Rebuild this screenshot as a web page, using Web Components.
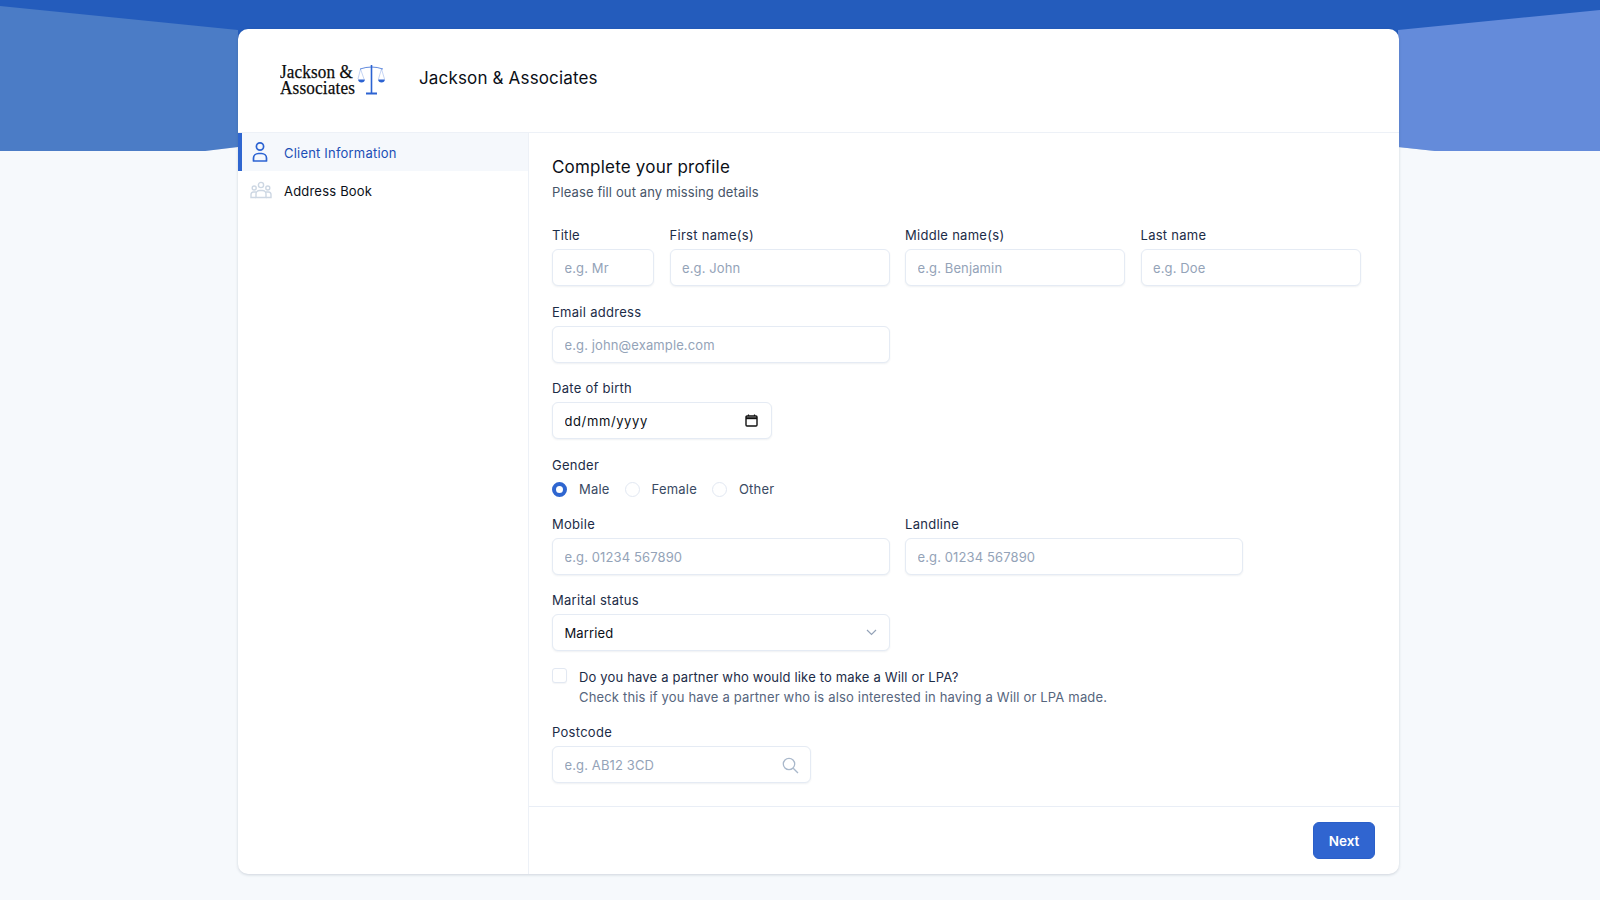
<!DOCTYPE html>
<html lang="en">
<head>
<meta charset="utf-8">
<title>Jackson &amp; Associates</title>
<style>
  html, body { margin: 0; height: 100%; }
  body {
    background: #f6f9fc;
    font-family: Inter, "Liberation Sans", sans-serif;
    font-size: 13px;
    letter-spacing: .15px;
    color: #000;
    position: relative;
    overflow: hidden;
  }
</style>
</head>
<body>
<page-backdrop></page-backdrop>
<app-card>
  <app-header slot="header" name="Jackson &amp; Associates"></app-header>
  <side-nav slot="nav">
    <nav-item active icon="person">Client Information</nav-item>
    <nav-item icon="people">Address Book</nav-item>
  </side-nav>
  <profile-form slot="main"></profile-form>
</app-card>

<script>
// small helper so every element gets an open root with its own styles
function shadow(el, html) {
  el.attachShadow({ mode: 'open' }).innerHTML = html;
}

class PageBackdrop extends HTMLElement {
  connectedCallback() {
    shadow(this, `
      <style>
        :host { position: absolute; top: 0; left: 0; right: 0; height: 151px; display: block; }
        svg { display: block; }
      </style>
      <svg width="1600" height="151" viewBox="0 0 1600 151">
        <rect width="1600" height="151" fill="#245cbc"/>
        <polygon points="0,6 238,30 238,147 205,151 0,151" fill="#4b7cc6"/>
        <polygon points="1398,30 1600,10 1600,151 1435,151 1398,147" fill="#648bda"/>
        <polygon points="205,151 238,147 238,151" fill="#f6f9fc"/>
        <polygon points="1398,147 1435,151 1398,151" fill="#f6f9fc"/>
      </svg>`);
  }
}

class AppCard extends HTMLElement {
  connectedCallback() {
    shadow(this, `
      <style>
        :host {
          position: relative;
          display: block;
          box-sizing: border-box;
          width: 1161px;
          height: 845px;
          margin: 29px 0 0 238px;
          background: #fff;
          border-radius: 10px;
          box-shadow: 0 1px 3px rgba(30, 50, 80, .18);
          overflow: hidden;
        }
        .body { display: flex; height: 741px; }
        ::slotted([slot=nav]) { width: 291px; flex: none; }
        ::slotted([slot=main]) { flex: 1; }
      </style>
      <slot name="header"></slot>
      <div class="body">
        <slot name="nav"></slot>
        <slot name="main"></slot>
      </div>`);
  }
}

class AppHeader extends HTMLElement {
  connectedCallback() {
    shadow(this, `
      <style>
        :host {
          display: flex;
          align-items: center;
          gap: 31px;
          height: 103px;
          padding-left: 42px;
          border-bottom: 1px solid #edf1f7;
        }
        svg { display: block; }
        svg text { font-family: "Liberation Serif", serif; font-size: 19px; fill: #0b0b0b; stroke: #0b0b0b; stroke-width: .25px; }
        h1 { margin: -5px 0 0; font-size: 17px; font-weight: 400; letter-spacing: .16px; line-height: 24px; color: #0b0f17; }
      </style>
      <svg width="108" height="40" viewBox="0 0 108 40" role="img">
        <text x="0" y="17" textLength="73" lengthAdjust="spacingAndGlyphs">Jackson &amp;</text>
        <text x="0" y="32.500" textLength="75" lengthAdjust="spacingAndGlyphs">Associates</text>
        <g fill="none" stroke="#2c63d2">
          <path d="M80 8 Q86 6 91.500 6 Q97 6 103 8" stroke-width="1" opacity=".75"/>
          <path d="M91.500 4 V32" stroke-width="1.600"/>
          <path d="M86 32.500 H97" stroke-width="1.800"/>
          <path d="M80.500 8 L78 18 M80.500 8 L84 18 M101.500 8 L98.500 18 M101.500 8 L104.500 18" stroke-width=".5" opacity=".55"/>
        </g>
        <path d="M78 18.500 H85 Q84.500 21.500 81.500 21.500 Q78.500 21.500 78 18.500 Z" fill="#2c63d2"/>
        <path d="M98 18.500 H105 Q104.500 21.500 101.500 21.500 Q98.500 21.500 98 18.500 Z" fill="#2c63d2"/>
      </svg>
      <h1>${this.getAttribute('name')}</h1>`);
  }
}

class SideNav extends HTMLElement {
  connectedCallback() {
    shadow(this, `
      <style>
        :host { display: block; box-sizing: border-box; border-right: 1px solid #edf1f7; }
      </style>
      <slot></slot>`);
  }
}

const NAV_ICONS = {
  person: `<svg width="20" height="22" viewBox="0 0 20 22" fill="none" stroke="#2c63d2" stroke-width="1.700">
      <circle cx="10" cy="5.500" r="3.600"/>
      <path d="M3.500 20 V17 a5 4.500 0 0 1 5 -4.500 h3 a5 4.500 0 0 1 5 4.500 V20 Z" stroke-linejoin="round"/>
    </svg>`,
  people: `<svg width="22" height="18" viewBox="0 0 22 18" fill="none" stroke="#cdd7e3" stroke-width="1.400">
      <circle cx="11" cy="4" r="2.600"/>
      <circle cx="4.200" cy="7" r="2"/>
      <circle cx="17.800" cy="7" r="2"/>
      <path d="M6 16.500 V13 a3.500 3.500 0 0 1 3.500 -3.500 h3 a3.500 3.500 0 0 1 3.500 3.500 V16.500 Z"/>
      <path d="M6 11 H3.500 A2.600 2.600 0 0 0 1 13.600 V16.500 H6 M16 11 H18.500 A2.600 2.600 0 0 1 21 13.600 V16.500 H16"/>
    </svg>`
};

class NavItem extends HTMLElement {
  connectedCallback() {
    shadow(this, `
      <style>
        :host {
          display: flex;
          align-items: center;
          height: 38px;
          box-sizing: border-box;
          padding-left: 12px;
          font-size: 13px;
          letter-spacing: .2px;
          color: #0b0f17;
        }
        :host([active]) {
          background: #f5f8fc;
          color: #1b4fb6;
          box-shadow: inset 4px 0 0 #2f66d0;
        }
        .icon { width: 34px; display: flex; }
        .label { padding-top: 1px; }
        svg { display: block; }
      </style>
      <span class="icon">${NAV_ICONS[this.getAttribute('icon')]}</span>
      <span class="label"><slot></slot></span>`);
  }
}

class FormField extends HTMLElement {
  connectedCallback() {
    shadow(this, `
      <style>
        :host { display: block; }
        label { display: block; font-size: 13px; letter-spacing: .28px; line-height: 19px; font-weight: 400; color: #1c2c47; margin-bottom: 4px; }
      </style>
      <label>${this.getAttribute('label')}</label>
      <slot></slot>`);
  }
}

const CONTROL_CSS = `
  :host { display: block; position: relative; }
  input, select {
    display: block;
    box-sizing: border-box;
    width: 100%;
    height: 37px;
    margin: 0;
    padding: 0 12px 0 11.500px;
    border: 1px solid #e5ebf4;
    border-radius: 6px;
    background: #fff;
    box-shadow: 0 1px 2px rgba(30, 50, 80, .07);
    font: 13px Inter, "Liberation Sans", sans-serif;
    letter-spacing: .12px;
    color: #0b0f17;
    outline: none;
    appearance: none;
  }
  input::placeholder { color: #94a3b8; opacity: 1; }
  svg { position: absolute; display: block; pointer-events: none; }
`;

class TextField extends HTMLElement {
  connectedCallback() {
    const ph = this.getAttribute('placeholder') || '';
    shadow(this, `
      <style>${CONTROL_CSS}</style>
      <input type="text" placeholder="${ph}">`);
  }
}

class DateField extends HTMLElement {
  connectedCallback() {
    shadow(this, `
      <style>${CONTROL_CSS}
        input { letter-spacing: .6px; }
      </style>
      <input type="text" value="dd/mm/yyyy">
      <svg style="right:14px;top:12px" width="13" height="13" viewBox="0 0 13 13" fill="none" stroke="#111">
        <rect x="1" y="2" width="11" height="10" rx="1" stroke-width="1.400"/>
        <path d="M1 4.200 H12" stroke-width="2"/>
        <path d="M3.500 .5 V2 M9.500 .5 V2" stroke-width="1.200"/>
      </svg>`);
  }
}

class SelectField extends HTMLElement {
  connectedCallback() {
    shadow(this, `
      <style>${CONTROL_CSS}</style>
      <select><option>${this.getAttribute('value')}</option></select>
      <svg style="right:13px;top:15px" width="11" height="7" viewBox="0 0 11 7" fill="none" stroke="#94a3b8" stroke-width="1.200">
        <path d="M1 1 L5.500 5.500 L10 1"/>
      </svg>`);
  }
}

class SearchField extends HTMLElement {
  connectedCallback() {
    shadow(this, `
      <style>${CONTROL_CSS}</style>
      <input type="text" placeholder="${this.getAttribute('placeholder')}">
      <svg style="right:12px;top:11px" width="17" height="17" viewBox="0 0 17 17" fill="none" stroke="#a9b8cb" stroke-width="1.300">
        <circle cx="7" cy="7" r="5.700"/>
        <path d="M11.200 11.200 L16 16"/>
      </svg>`);
  }
}

class RadioOption extends HTMLElement {
  connectedCallback() {
    shadow(this, `
      <style>
        :host { display: inline-flex; align-items: center; gap: 12px; line-height: 20px; color: #3a4a63; font-size: 13px; letter-spacing: .2px; }
        i { box-sizing: border-box; width: 15px; height: 15px; border-radius: 50%; border: 1px solid #e2e8f2; background: #fff; }
        :host([checked]) i { border: 4.500px solid #2f66d0; }
      </style>
      <i></i><slot></slot>`);
  }
}

class CheckOption extends HTMLElement {
  connectedCallback() {
    shadow(this, `
      <style>
        :host { display: flex; gap: 12px; font-size: 13px; letter-spacing: .17px; line-height: 20px; color: #1c2c47; }
        i { box-sizing: border-box; flex: none; width: 15px; height: 15px; margin-top: 1px; border-radius: 3px; border: 1px solid #e2e8f2; background: #fff; box-shadow: 0 1px 1px rgba(30,50,80,.05); }
        p { margin: 0; color: #56657d; }
      </style>
      <i></i>
      <div><slot></slot><p>${this.getAttribute('hint')}</p></div>`);
  }
}

class PrimaryButton extends HTMLElement {
  connectedCallback() {
    shadow(this, `
      <style>
        :host { display: block; }
        button {
          display: block;
          width: 62px;
          height: 37px;
          border: 1px solid #2a5fc9;
          border-radius: 6px;
          background: #3065d0;
          color: #fff;
          font: 600 13.500px Inter, "Liberation Sans", sans-serif;
          padding: 0;
        }
      </style>
      <button type="button"><slot></slot></button>`);
  }
}

class ProfileForm extends HTMLElement {
  connectedCallback() {
    shadow(this, `
      <style>
        :host { display: flex; flex-direction: column; }
        .content { flex: 1; padding: 22px 24px 23px 23px; display: flex; flex-direction: column; gap: 16px; }
        h2 { margin: 0; font-size: 17px; letter-spacing: .2px; line-height: 24px; font-weight: 400; color: #0b0f17; }
        .sub { margin: 3px 0 8px; line-height: 20px; font-size: 13px; letter-spacing: .12px; color: #475569; }
        .names { display: grid; grid-template-columns: 102px 220px 220px 220px; column-gap: 15.500px; margin-bottom: 1px; }
        .half { display: grid; grid-template-columns: 338px 338px; column-gap: 15px; }
        .w338 { width: 338px; }
        .w220 { width: 220px; }
        .w259 { width: 259px; }
        .radios { display: flex; gap: 15px; margin-top: 4px; height: 20px; align-items: center; }
        .gender-label { line-height: 20px; letter-spacing: .28px; color: #1c2c47; }
        footer { height: 68px; flex: none; box-sizing: border-box; border-top: 1px solid #e9eef6; padding: 15px 24px 0; display: flex; justify-content: flex-end; }
      </style>
      <div class="content">
        <div>
          <h2>Complete your profile</h2>
          <div class="sub">Please fill out any missing details</div>
        </div>
        <div class="names">
          <form-field label="Title"><text-field placeholder="e.g. Mr"></text-field></form-field>
          <form-field label="First name(s)"><text-field placeholder="e.g. John"></text-field></form-field>
          <form-field label="Middle name(s)"><text-field placeholder="e.g. Benjamin"></text-field></form-field>
          <form-field label="Last name"><text-field placeholder="e.g. Doe"></text-field></form-field>
        </div>
        <form-field class="w338" label="Email address"><text-field placeholder="e.g. john@example.com"></text-field></form-field>
        <form-field class="w220" label="Date of birth"><date-field></date-field></form-field>
        <div>
          <div class="gender-label">Gender</div>
          <div class="radios">
            <radio-option checked>Male</radio-option>
            <radio-option>Female</radio-option>
            <radio-option>Other</radio-option>
          </div>
        </div>
        <div class="half">
          <form-field label="Mobile"><text-field placeholder="e.g. 01234 567890"></text-field></form-field>
          <form-field label="Landline"><text-field placeholder="e.g. 01234 567890"></text-field></form-field>
        </div>
        <form-field class="w338" label="Marital status"><select-field value="Married"></select-field></form-field>
        <check-option hint="Check this if you have a partner who is also interested in having a Will or LPA made.">Do you have a partner who would like to make a Will or LPA?</check-option>
        <form-field class="w259" label="Postcode"><search-field placeholder="e.g. AB12 3CD"></search-field></form-field>
      </div>
      <footer><primary-button>Next</primary-button></footer>`);
  }
}

customElements.define('page-backdrop', PageBackdrop);
customElements.define('app-card', AppCard);
customElements.define('app-header', AppHeader);
customElements.define('side-nav', SideNav);
customElements.define('nav-item', NavItem);
customElements.define('form-field', FormField);
customElements.define('text-field', TextField);
customElements.define('date-field', DateField);
customElements.define('select-field', SelectField);
customElements.define('search-field', SearchField);
customElements.define('radio-option', RadioOption);
customElements.define('check-option', CheckOption);
customElements.define('primary-button', PrimaryButton);
customElements.define('profile-form', ProfileForm);
</script>
</body>
</html>
